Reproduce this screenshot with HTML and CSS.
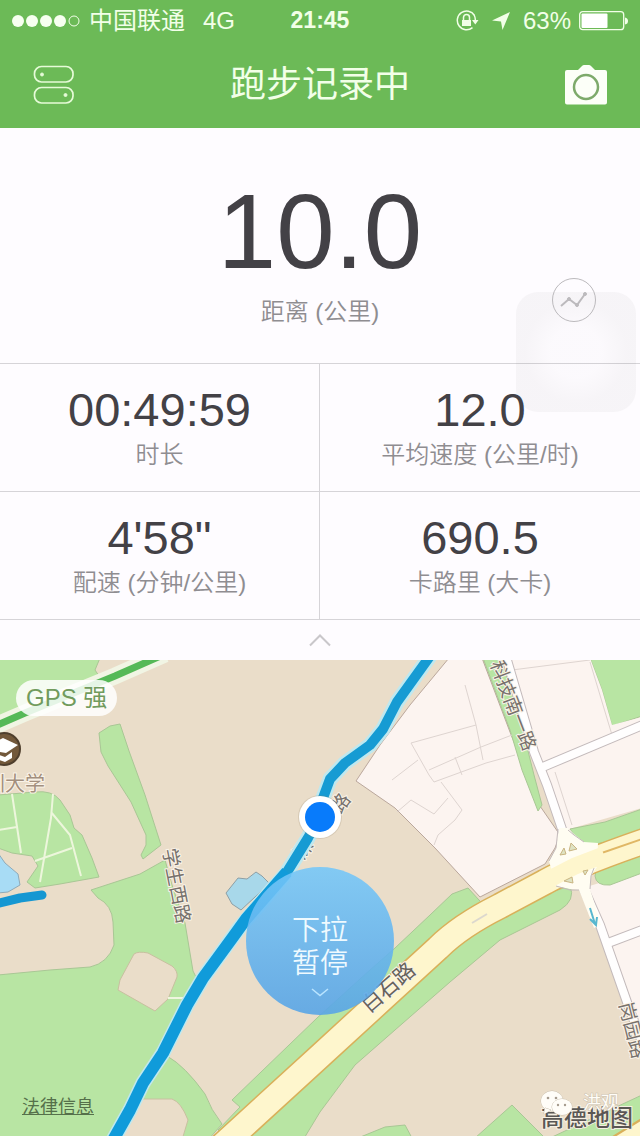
FILE: index.html
```html
<!DOCTYPE html>
<html lang="zh-CN">
<head>
  <meta charset="UTF-8">
  <meta name="viewport" content="width=device-width, initial-scale=1.0">
  <title>跑步记录中</title>
  <link rel="stylesheet" href="styles.css">
</head>
<body>
  <header class="header">
    <div class="status">
      <div class="status-left">
        <svg class="signal" width="68" height="14" viewBox="0 0 68 14">
          <circle cx="6" cy="7" r="6"/><circle cx="20" cy="7" r="6"/><circle cx="34" cy="7" r="6"/><circle cx="48" cy="7" r="6"/>
          <circle class="empty" cx="62" cy="7" r="5"/>
        </svg>
        <span>中国联通</span>
        <span class="network">4G</span>
      </div>
      <div class="clock">21:45</div>
      <div class="status-right">
        <svg width="24" height="22" viewBox="0 0 24 22">
          <path d="M19.5 5.5A9.3 9.3 0 1 0 17.500 17.600M19.300 5.500A9 9 0 0 1 20.300 10" fill="none" stroke="#f2ffe8" stroke-width="1.500"/>
          <path d="M17 10h6.500l-3.200 4.500z" fill="#f2ffe8"/>
          <path d="M7 10h9v6H7z" fill="#f2ffe8"/>
          <path d="M8.500 10V7.500a3 3 0 0 1 6 0V10" fill="none" stroke="#f2ffe8" stroke-width="1.500"/>
        </svg>
        <svg class="arrow" width="20" height="20" viewBox="0 0 20 20"><path d="M19 1L11.500 19L10 10.500L1 9.500z" fill="#f2ffe8"/></svg>
        <span>63%</span>
        <svg class="battery" width="49" height="20" viewBox="0 0 49 20">
          <rect x="0.700" y="0.700" width="44" height="18" rx="3" fill="none" stroke="#f2ffe8" stroke-width="1.300"/>
          <rect x="2.500" y="2.500" width="26" height="14.500" rx="1" fill="#fff"/>
          <path d="M46 6.500q3 0.500 3 3.500t-3 3.500z" fill="#f2ffe8"/>
        </svg>
      </div>
    </div>
    <nav class="nav">
      <button class="icon-btn" aria-label="设置">
        <svg width="42" height="40" viewBox="0 0 42 40" fill="none" stroke="#e6fbd8" stroke-width="1.700">
          <rect x="1.500" y="1.500" width="38.500" height="15.500" rx="7"/>
          <rect x="1.500" y="22.500" width="38.500" height="15.500" rx="7"/>
          <circle cx="9" cy="9.500" r="1.500" fill="#e6fbd8" stroke-width="1"/>
          <circle cx="32.500" cy="30" r="1.500" fill="#e6fbd8" stroke-width="1"/>
        </svg>
      </button>
      <h1>跑步记录中</h1>
      <button class="icon-btn" aria-label="拍照">
        <svg width="42" height="40" viewBox="0 0 42 40">
          <path d="M2 5h11l4-4q1-1 2-1h5q1 0 2 1L30 5h10q2 0 2 2v30.500q0 2-2 2H2q-2 0-2-2V7q0-2 2-2z" fill="#fcfff8"/>
          <circle cx="21" cy="22" r="12" fill="#fcfff8" stroke="#7daa6b" stroke-width="2.500"/>
        </svg>
      </button>
    </nav>
  </header>

  <main>
    <section class="distance">
      <div class="big">10.0</div>
      <div class="label">距离 (公里)</div>
      <div class="assistive"></div>
      <button class="chart-btn" aria-label="图表">
        <svg width="28" height="18" viewBox="0 0 28 18" fill="#bcbabd" stroke="#bcbabd">
          <path d="M1 15L9 8L17 14L25 3" fill="none" stroke-width="2"/>
          <circle cx="9" cy="8" r="1.500"/><circle cx="17" cy="14" r="1.500"/><circle cx="25" cy="3" r="1.500"/>
        </svg>
      </button>
    </section>

    <section class="stats">
      <div class="stat"><div class="value">00:49:59</div><div class="label">时长</div></div>
      <div class="stat"><div class="value">12.0</div><div class="label">平均速度 (公里/时)</div></div>
      <div class="stat"><div class="value">4'58"</div><div class="label">配速 (分钟/公里)</div></div>
      <div class="stat"><div class="value">690.5</div><div class="label">卡路里 (大卡)</div></div>
    </section>

    <button class="collapse" aria-label="收起">
      <svg width="22" height="14" viewBox="0 0 22 14"><path d="M1 12.500L11 2.500L21 12.500" fill="none" stroke="#c9c7ca" stroke-width="2"/></svg>
    </button>
  </main>

  <section class="map">
    <svg class="map-canvas" viewBox="0 660 640 476" preserveAspectRatio="xMidYMin slice">
      <rect x="0" y="660" width="640" height="476" fill="#eaddc9"/>

      <!-- parks -->
      <g class="park">
        <path d="M-2 658H100L95 670L103 682L45 706L-2 716z"/>
        <path d="M99 733L110 726L120 724L129 751L145 795L161 845L143 859L141 855L146 845L146 835L131 802L108 766L101 752z"/>
        <path d="M-2 795L35 792Q52 790 60 800L70 815L74 828L82 835L92 858L99 877L60 884L35 888L27 882L38 866L32 856L12 853L-2 848z"/>
        <path d="M91 890L140 874L165 860L172 885L185 923L193 971L200 985L167 1056Q185 1066 205 1094Q211 1110 222 1124L208 1140H-2V975L50 970L90 967Q108 963 114 945L113 922Q112 905 98 898z"/>
        <path d="M468 888L452 894L430 915L395 948L370 970L317 1018L232 1100L240 1107L218 1130L245 1145H300L320 1112L355 1065L395 1030L450 982L500 940L560 910Q576 900 570 886L490 912z"/>
        <path d="M590 658H642V716L612 726L602 690z"/>
        <path d="M475 1138L512 1105L545 1138z"/>
        <path d="M358 1138L385 1127L405 1125L412 1138z"/>
        <path d="M550 1138L642 1095V1138z"/>
      </g>
      <g class="ground">
        <path d="M134 954Q138 951 148 953L172 966Q178 971 177 977L168 999L155 1011L118 990L120 980z"/>
        <path d="M133 1099H172Q181 1102 188 1120L182 1140H108z"/>
      </g>
      <path d="M168 998H185" stroke="#eff6df" stroke-width="2"/>
      <g fill="none" stroke="#edf6dc" stroke-width="2">
        <path d="M12 794L21 853M53 794L51 818L40 882M51 812L70 835L81 876M-2 830L17 827M35 861L72 848"/>
      </g>
      <path d="M-2 853L5 863L18 874L20 885L8 892L-2 893z" fill="#a8dcf5" stroke="#8faab8"/>
      <path d="M226 893L238 878L247 879L256 872L262 876L270 884L255 897L241 910L232 904z" fill="#a8d8ea" stroke="#8d9fa5"/>

      <!-- city blocks -->
      <g fill="#fcf4f0" stroke="#baa79c">
        <path d="M449 658L410 705L380 745L356 781L395 808L435 848L480 897L545 864L555 848L560 835L540 806L510 732L482 658z"/>
        <path d="M508 658H590L602 690L612 725L642 717V808L566 830L550 790z" stroke="none"/>
        <path d="M583 888L642 870V1045L620 985z" stroke="none"/>
      </g>
      <g class="park">
        <path d="M483 658H500L515 700L524 735L534 775L542 805L538 811L522 770L510 730z"/>
        <path d="M570 829L605 822L642 809V835L590 845L578 840z"/>
        <path d="M597 866L642 853V873L610 885Q596 886 595 876z"/>
      </g>
      <g fill="none" stroke="#ded4d0">
        <path d="M465 685L476 725L483 760M476 725L411 743L429 775L434 782L486 763L515 755M429 770L481 747L512 735M455 757L462 775M441 782L462 810L455 820L438 835L434 845M397 812L411 800L434 814L448 798M392 780L418 760M512 670L590 660M590 662L612 735M555 772L572 825"/>
      </g>

      <!-- side streets -->
      <g class="street-edge">
        <path d="M504 650L534 752L547 785L564 835"/>
        <path d="M538 769L645 724"/>
        <path d="M580 880L600 925L628 1005L645 1050"/>
        <path d="M608 943L645 929"/>
      </g>
      <g class="street">
        <path d="M504 650L534 752L547 785L564 835"/>
        <path d="M538 769L645 724"/>
        <path d="M580 880L600 925L628 1005L645 1050"/>
        <path d="M608 943L645 929"/>
      </g>

      <!-- main road -->
      <g fill="none" stroke-linejoin="round">
        <path d="M215 1152L320 1056L380 1001L438 948Q460 926 500 906L545 882Q575 865 645 841" stroke="#d9b05a" stroke-width="27"/>
        <path d="M215 1152L320 1056L380 1001L438 948Q460 926 500 906L545 882Q575 865 645 841" stroke="#fef6cd" stroke-width="24"/>
        <path d="M590 857L642 839" stroke="#e0b765" stroke-width="2"/>
        <path d="M472 923L487 914" stroke="#dcd8ce" stroke-width="2"/>
        <path d="M616 1142L645 1124" stroke="#d9b05a" stroke-width="14"/>
        <path d="M616 1144L645 1126" stroke="#fef6cd" stroke-width="13"/>
      </g>

      <!-- crossing -->
      <path d="M559 828L568 828L574 834L584 842L598 843L597 867L591 876L590 889L601 925L594 928L579 890L570 889L556 886L549 861L556 848z" fill="#fffdf2"/>
      <path d="M558 829L556 848L549 861M568 830L574 835L584 842M594 868L591 876L590 889M556 886L570 890L579 890" fill="none" stroke="#c3babb"/>
      <path d="M540 884L575 866L604 855" fill="none" stroke="#fef6cd" stroke-width="17"/>
      <path d="M560 855L564 848L566 854zM569 851L571 843L577 849zM583 871L588 870L585 875zM564 881L572 877L573 883z" fill="#dfe3c2" stroke="#c9b582"/>
      <path d="M590 908L595 924M590 919L596 925L597 917" fill="none" stroke="#58b7cf" stroke-width="2"/>

      <!-- metro line -->
      <g fill="none">
        <path d="M-5 726L25 713L115 676L165 654" stroke="#f1f5e4" stroke-width="17"/>
        <path d="M-5 726L25 713L115 676L165 654" stroke="#55b957" stroke-width="7"/>
      </g>

      <!-- street names -->
      <g class="place">
        <text transform="translate(507 708) rotate(69)">科技南一路</text>
        <text transform="translate(170 887) rotate(79)">学生西路</text>
        <text transform="translate(626 1032) rotate(76)">岗园路</text>
        <text class="road-name" transform="translate(393 993) rotate(-41)">白石路</text>
        <text transform="translate(346 807) rotate(-55)">路</text>
        <text transform="translate(309 853) rotate(-55)">深</text>
        <text class="campus" x="45" y="791">圳大学</text>
      </g>
      <circle cx="4" cy="749" r="16" fill="#72583a" stroke="#4f3f2d" stroke-width="2"/>
      <path d="M-10 744L3 738L18 745L6 753L-10 750zM-4 754L5 757L12 752V758L5 762L-4 759z" fill="#fff"/>

      <!-- running track -->
      <g fill="none" stroke-linejoin="round">
        <path d="M433 652L397 702L383 729L370 745L345 763L330 779L323 798L319 817L308 838L287 872L240 927L203 978L187 1005L173 1033L163 1053L143 1083L130 1110L112 1142" stroke="#bfe8ef" stroke-width="15"/>
        <path d="M433 652L397 702L383 729L370 745L345 763L330 779L323 798L319 817L308 838L287 872L240 927" stroke="#169bd3" stroke-width="10"/>
        <path d="M287 872L246 919L233 937L203 978L187 1005L173 1033L163 1053L143 1083L130 1110L112 1142" stroke="#109bda" stroke-width="12"/>
        <path d="M-5 904L20 898L42 895" stroke="#1597d2" stroke-width="9" stroke-linecap="round"/>
      </g>
      <circle cx="320" cy="817" r="22" fill="#8c7b62" opacity="0.200"/>
      <circle cx="320" cy="817" r="21" fill="#fff"/>
      <circle cx="320" cy="817" r="15" fill="#087bfb"/>

      <text class="map-brand" x="587" y="1126">高德地图</text>
      <g class="watermark">
        <text x="583" y="1109">洪观</text>
        <ellipse cx="552" cy="1101" rx="11" ry="10"/>
        <path d="M545 1108L544 1114L551 1110z"/>
        <ellipse cx="562" cy="1107" rx="10" ry="8"/>
        <g fill="#a59b8e" stroke="none"><circle cx="548" cy="1098" r="1.300"/><circle cx="556" cy="1098" r="1.300"/><circle cx="558" cy="1105" r="1.200"/><circle cx="565" cy="1105" r="1.200"/></g>
      </g>
    </svg>

    <div class="gps">GPS 强</div>
    <button class="pause">
      <span>下拉<br>暂停</span>
      <svg width="18" height="10" viewBox="0 0 18 10"><path d="M1 1L9 7.500L17 1" fill="none" stroke="#b9e4ff" stroke-width="1.600"/></svg>
    </button>
    <a class="legal" href="#">法律信息</a>
  </section>
</body>
</html>
```

FILE: styles.css
```css
* { box-sizing: border-box; }
body { margin: 0; min-height: 100vh; display: flex; flex-direction: column; background: #fefcff; color: #434146; font-family: "Liberation Sans", "Noto Sans CJK SC", sans-serif; }
button { padding: 0; border: none; background: none; font-family: inherit; cursor: pointer; }
svg { display: block; }

.header { background: #6cba57; color: #f2ffe8; }
.status { display: grid; grid-template-columns: 1fr auto 1fr; align-items: center; height: 41px; padding: 0 12px; font-size: 24px; line-height: 41px; }
.status-left, .status-right { display: flex; align-items: center; }
.status-left { gap: 9px; }
.status-right { justify-content: flex-end; gap: 8px; }
.signal { fill: #f7fff0; }
.signal .empty { fill: none; stroke: #f2ffe8; }
.network { margin-left: 9px; }
.arrow { margin: 0 4px; }
.clock { font-size: 23px; font-weight: bold; }
.nav { display: flex; align-items: center; justify-content: space-between; height: 87px; padding: 0 33px; }
.nav h1 { margin: 0; font-size: 36px; font-weight: 400; line-height: 48px; }

.distance { position: relative; height: 235px; padding-top: 44px; text-align: center; }
.big { font-size: 105px; line-height: 120px; }
.label { color: #8f8d91; font-size: 24px; font-weight: 350; line-height: 34px; }
.distance .label { margin-top: 3px; }
.assistive { position: absolute; top: 164px; right: 4px; width: 120px; height: 120px; border-radius: 22px; background: radial-gradient(circle, rgba(60, 50, 70, 0.01) 30%, rgba(60, 55, 60, 0.04) 60%); }
.chart-btn { position: absolute; top: 150px; right: 44px; display: flex; align-items: center; justify-content: center; width: 44px; height: 44px; border: 1px solid #bcbabd; border-radius: 50%; }

.stats { display: grid; grid-template-columns: 1fr 1fr; border-top: 1px solid #d6d4d8; }
.stat { height: 128px; padding-top: 18px; border-bottom: 1px solid #d6d4d8; text-align: center; }
.stat:nth-child(odd) { border-right: 1px solid #d6d4d8; }
.value { font-size: 47px; line-height: 56px; }
.collapse { display: flex; align-items: center; justify-content: center; width: 100%; height: 40px; }

.map { position: relative; flex: 1; min-height: 476px; overflow: hidden; background: #eaddc9; }
.map-canvas { position: absolute; width: 100%; height: 100%; }
.park { fill: #b8e5a3; stroke: #a9c795; }
.ground { fill: #eaddc9; stroke: #c8c0a0; }
.street-edge { fill: none; stroke: #c3babb; stroke-width: 10px; }
.street { fill: none; stroke: #fffefe; stroke-width: 8px; }
.place { fill: #77716c; stroke: #faf3e8; stroke-width: 2px; paint-order: stroke; font-size: 19px; text-anchor: middle; }
.road-name { fill: #66625b; font-size: 21px; }
.campus { fill: #a38f7e; font-size: 20px; text-anchor: end; }
.map-brand { fill: #5a5754; stroke: #f5efe2; stroke-width: 2px; paint-order: stroke; font-size: 23px; font-weight: 500; text-anchor: middle; }
.watermark { fill: #fffdf8; stroke: #c9bfae; stroke-width: 1px; paint-order: stroke; font-size: 18px; }

.gps { position: absolute; top: 20px; left: 16px; padding: 0 10px; border-radius: 18px; background: rgba(255, 255, 255, 0.85); color: #719b5d; font-size: 24px; line-height: 36px; }
.pause { position: absolute; top: 207px; left: 50%; display: flex; flex-direction: column; align-items: center; gap: 8px; width: 148px; height: 148px; margin-left: -74px; padding-top: 47px; border-radius: 50%; background: linear-gradient(rgba(116, 199, 249, 0.88), rgba(89, 165, 230, 0.9)); color: #effaff; font-size: 28px; font-weight: 350; line-height: 33px; }
.legal { position: absolute; bottom: 16px; left: 22px; color: #55704a; font-size: 18px; line-height: 26px; }
```
